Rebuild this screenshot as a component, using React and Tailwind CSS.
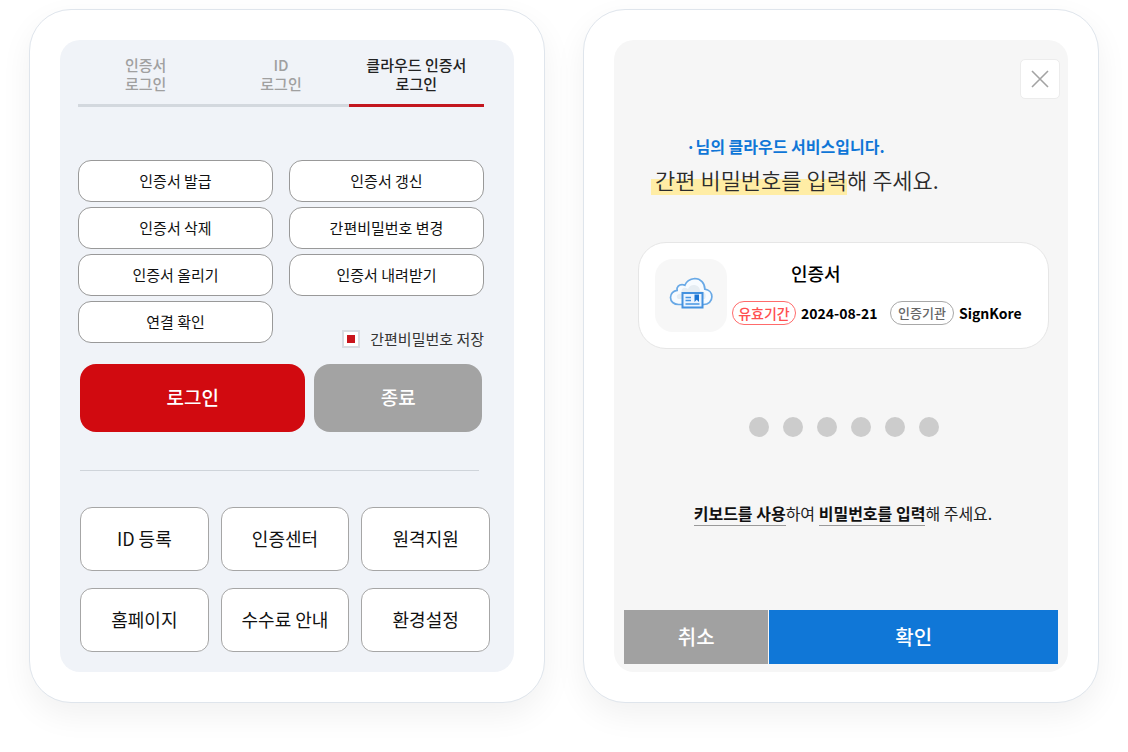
const tabs = [
  { lines: ['인증서', '로그인'], active: false },
  { lines: ['ID', '로그인'], active: false },
  { lines: ['클라우드 인증서', '로그인'], active: true },
];

const certActions = [
  '인증서 발급',
  '인증서 갱신',
  '인증서 삭제',
  '간편비밀번호 변경',
  '인증서 올리기',
  '인증서 내려받기',
  '연결 확인',
];

const shortcuts = ['ID 등록', '인증센터', '원격지원', '홈페이지', '수수료 안내', '환경설정'];

function Frame({ children }) {
  return (
    <section className="flex min-w-0 flex-1 flex-col rounded-[42px] border border-[#dfe5ec] bg-white p-[30px] shadow-[0_12px_32px_rgba(0,0,0,0.06)]">
      {children}
    </section>
  );
}

function CloudCertIcon() {
  return (
    <svg viewBox="0 0 44 34" className="h-[34px] w-[44px]" fill="none" aria-hidden="true">
      <path
        d="M13 27.500H9.500C4.800 27.500 1.500 24.500 1.500 20.500C1.500 16.700 4.400 13.800 8.100 13.400C7.400 10.200 10 7.300 13.600 7.600C14.400 7.600 15.200 7.800 15.900 8.200C17.300 4.400 21.100 2 25.800 1.500C31.600 1.500 35.900 6.200 35.800 12.100C39.800 12.600 42.900 15.600 42.900 19.700C42.900 24.200 39.300 27.500 34.700 27.500H33"
        fill="#f7fbff"
        stroke="#69a9e6"
        strokeWidth="1.700"
      />
      <path
        d="M9 22C6 19 9 16 13 17C11 12 15 9 19 12C21 6 31 7 31 14C36 14 38 18 36 22Z"
        fill="#e6edf3"
      />
      <rect x="13.500" y="16" width="20" height="14.500" fill="#eaf4ff" stroke="#4391df" strokeWidth="2" />
      <path d="M16.500 20.500H22M16.500 23.500H22M16.500 27H30.500" stroke="#4795e2" strokeWidth="1.700" />
      <path d="M25.500 17.500H30V25L27.750 22.800L25.500 25Z" fill="#1a74d3" />
    </svg>
  );
}

function LoginPanel() {
  return (
    <div className="flex flex-1 flex-col rounded-[20px] bg-[#f0f3f8] pt-[15px] pr-6 pb-5 pl-[18px]">
      <div role="tablist" className="mr-[6px] grid grid-cols-3">
        {tabs.map((tab) => (
          <button
            key={tab.lines.join(' ')}
            type="button"
            role="tab"
            aria-selected={tab.active}
            className={
              tab.active
                ? 'flex h-[52px] flex-col items-center border-b-[3px] border-[#c3161f] text-[15px] leading-[19px] font-medium text-[#222222]'
                : 'flex h-[52px] flex-col items-center border-b-[3px] border-[#d3d8de] text-[15px] leading-[19px] font-medium text-[#a0a0a0]'
            }
          >
            {tab.lines.map((line) => (
              <span key={line}>{line}</span>
            ))}
          </button>
        ))}
      </div>

      <div className="mt-[53px] mr-[6px] grid grid-cols-2 gap-x-4 gap-y-[5px]">
        {certActions.map((label) => (
          <button
            key={label}
            type="button"
            className="h-[42px] rounded-[13px] border border-[#999999] bg-white text-[15px] text-[#111111]"
          >
            {label}
          </button>
        ))}
        <label className="-mb-[6px] flex items-center justify-end gap-[10px] self-end text-[15px] leading-5 text-[#333333]">
          <input
            type="checkbox"
            defaultChecked
            className="h-[18px] w-[18px] appearance-none border-2 border-[#d8dce2] bg-white p-[3px] shadow-[inset_0_0_0_3px_#fff] checked:bg-[#c9141c]"
          />
          간편비밀번호 저장
        </label>
      </div>

      <div className="mt-[21px] mr-2 ml-[2px] flex gap-[9px]">
        <button
          type="button"
          className="h-[68px] flex-[226] rounded-2xl bg-[#d10a10] pb-[2px] text-[19px] font-medium text-white"
        >
          로그인
        </button>
        <button
          type="button"
          className="h-[68px] flex-[168] rounded-2xl bg-[#a3a3a3] pb-[2px] text-[19px] font-medium text-white"
        >
          종료
        </button>
      </div>

      <hr className="mt-[38px] mr-[11px] ml-[2px] border-[#cfd4da]" />

      <div className="mt-9 ml-[2px] grid grid-cols-3 gap-x-3 gap-y-[17px]">
        {shortcuts.map((label) => (
          <button
            key={label}
            type="button"
            className="h-16 rounded-xl border border-[#a6a6a6] bg-white pb-[2px] text-[18px] text-[#111111]"
          >
            {label}
          </button>
        ))}
      </div>
    </div>
  );
}

function PasswordPanel() {
  return (
    <div className="flex flex-1 flex-col rounded-[20px] bg-[#f6f6f6] px-[10px] pt-[19px] pb-2">
      <div className="flex justify-end">
        <button
          type="button"
          aria-label="닫기"
          className="mr-[-2px] flex h-10 w-10 items-center justify-center rounded-[5px] border border-[#ececec] bg-white"
        >
          <svg viewBox="0 0 18 18" className="h-[18px] w-[18px]" aria-hidden="true">
            <path d="M1 1L17 17M17 1L1 17" stroke="#a3a3a3" strokeWidth="1.600" />
          </svg>
        </button>
      </div>

      <p className="mt-[35px] ml-[62px] text-[16px] leading-6 font-bold text-[#0f76d7]">
        ·님의 클라우드 서비스입니다.
      </p>
      <h1 className="ml-[27px] text-[22px] leading-[42px] font-[350] text-[#2b2b2b]">
        <span className="bg-linear-to-b from-transparent from-50% to-[#ffeda5] to-50% pl-1">
          간편 비밀번호를 입력
        </span>
        해 주세요.
      </h1>

      <div className="mt-[42px] mr-[9px] ml-[14px] flex items-center gap-[5px] rounded-[28px] border border-[#e6e6e6] bg-white p-4">
        <div className="flex h-[73px] w-[72px] shrink-0 items-center justify-center rounded-[18px] bg-[#f7f7f7] pb-1">
          <CloudCertIcon />
        </div>
        <div className="flex flex-1 flex-col gap-4 pb-[6px]">
          <h2 className="pl-[59px] text-[18px] leading-6 font-medium text-black">인증서</h2>
          <dl className="flex items-center text-[14px] leading-[22px] whitespace-nowrap">
            <dt className="flex h-6 w-16 items-center justify-center rounded-full border border-[#ff6b6b] text-[14px] font-medium text-[#ff4f4f]">
              유효기간
            </dt>
            <dd className="w-[94px] pl-[5px] font-bold text-black">2024-08-21</dd>
            <dt className="flex h-6 w-16 items-center justify-center rounded-full border border-[#a8a8a8] text-[13px] font-medium text-[#666666]">
              인증기관
            </dt>
            <dd className="pl-[5px] font-bold text-black">SignKore</dd>
          </dl>
        </div>
      </div>

      <div role="img" aria-label="비밀번호 6자리" className="mt-[68px] flex justify-center gap-[14px] pl-[5px]">
        {[0, 1, 2, 3, 4, 5].map((i) => (
          <span key={i} className="h-5 w-5 rounded-full bg-[#cccccc]" />
        ))}
      </div>

      <p className="mt-[64px] pl-1 text-center text-[16px] leading-6 text-[#222222]">
        <strong className="border-b border-[#999999] font-bold text-[#111111]">키보드를 사용</strong>하여{' '}
        <strong className="border-b border-[#999999] font-bold text-[#111111]">비밀번호를 입력</strong>해 주세요.
      </p>

      <div className="mt-auto flex gap-px">
        <button type="button" className="h-[54px] flex-1 bg-[#a1a1a1] text-[20px] font-medium text-white">
          취소
        </button>
        <button type="button" className="h-[54px] flex-2 bg-[#1077d7] text-[20px] font-medium text-white">
          확인
        </button>
      </div>
    </div>
  );
}

export default function App() {
  return (
    <main className="flex gap-[38px] bg-white px-[29px] pt-[9px] pb-12 font-['Noto_Sans_CJK_KR',sans-serif]">
      <Frame>
        <LoginPanel />
      </Frame>
      <Frame>
        <PasswordPanel />
      </Frame>
    </main>
  );
}
